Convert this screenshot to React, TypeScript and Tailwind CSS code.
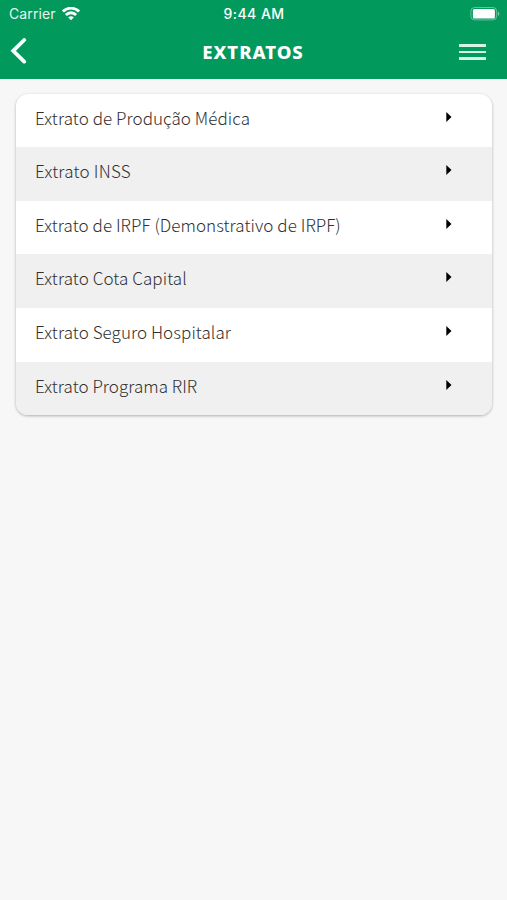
import React from "react";

const items = [
  { label: "Extrato de Produção Médica", spacing: "tracking-[0.07px]" },
  { label: "Extrato INSS", spacing: "tracking-[0.22px]" },
  { label: "Extrato de IRPF (Demonstrativo de IRPF)", spacing: "tracking-[0.06px]" },
  { label: "Extrato Cota Capital", spacing: "tracking-[0.08px]" },
  { label: "Extrato Seguro Hospitalar", spacing: "tracking-[0.07px]" },
  { label: "Extrato Programa RIR", spacing: "tracking-[0.04px]" },
];

const StatusBar = () => {
  return (
    <div className="grid h-[27px] grid-cols-3 items-center pl-[9px] pr-[7px] font-['Inter',sans-serif] text-white">
      <div className="flex items-center gap-[6px]">
        <span className="text-[14px] leading-[27px] tracking-[0.1px] text-[#e3f7ed]">Carrier</span>
        <svg width="18" height="14" viewBox="0 0 18 14" fill="none" stroke="currentColor" strokeWidth="2.8">
          <path d="M0.9 4.4C5.4 0.1 12.6 0.1 17.1 4.4" />
          <path d="M3.9 7.9C6.8 5 11.2 5 14.1 7.9" />
          <path d="M9 13.3L6.2 10.5C7.8 8.9 10.2 8.9 11.8 10.5Z" fill="currentColor" stroke="none" />
        </svg>
      </div>
      <div className="pr-[1px] text-center text-[14px] font-medium leading-[27px] tracking-[0.45px]">9:44 AM</div>
      <div className="flex justify-end">
        <svg width="30" height="14" viewBox="0 0 30 14" fill="none">
          <rect x="0.9" y="0.5" width="25.8" height="12.4" rx="3.8" stroke="#fff" strokeOpacity="0.4" />
          <rect x="2.9" y="2" width="22" height="9.4" rx="1.5" fill="#fff" />
          <path d="M28 4.6C29.8 5.4 29.8 8.2 28 9Z" fill="#fff" fillOpacity="0.5" />
        </svg>
      </div>
    </div>
  );
};

const Header = () => {
  return (
    <div className="flex h-[50px] items-center justify-between pl-[10px] pr-[21px] text-white">
      <svg width="28" height="28" viewBox="0 0 28 28" fill="none" stroke="currentColor" strokeWidth="3.8" strokeLinecap="round">
        <path d="M14.2 2L3.2 12.8L14.2 23.6" />
      </svg>
      <h1 className="pl-[9px] font-['Noto_Sans',sans-serif] text-[18.5px] font-extrabold leading-[50px] tracking-[1px]">
        EXTRATOS
      </h1>
      <div className="flex w-[27px] flex-col gap-[4px]">
        <div className="h-[2.5px] bg-[#d5f5e5]"></div>
        <div className="h-[2.5px] bg-[#d5f5e5]"></div>
        <div className="h-[2.5px] bg-[#d5f5e5]"></div>
      </div>
    </div>
  );
};

const App = () => {
  return (
    <div className="min-h-screen bg-[#f7f7f7]">
      <div className="h-[79px] bg-[#02995d]">
        <StatusBar />
        <Header />
      </div>
      <div className="ml-[16px] mr-[15px] mt-[15px] overflow-hidden rounded-[12px] bg-white shadow-[0_1px_3px_rgba(0,0,0,0.3)]">
        {items.map((item) => (
          <div
            key={item.label}
            className="flex h-[53.7px] items-start justify-between pl-[19px] pr-[40px] first:h-[53px] even:bg-[#f0f0f0]"
          >
            <span
              className={`whitespace-nowrap pt-[12px] font-['Noto_Sans_CJK_SC',sans-serif] text-[17px] font-light leading-[24px] text-[#303030] ${item.spacing}`}
            >
              {item.label}
            </span>
            <svg width="6" height="10" viewBox="0 0 6 10" className="mt-[18px]">
              <path d="M0.3 0L5.5 5L0.3 10Z" fill="#000" />
            </svg>
          </div>
        ))}
      </div>
    </div>
  );
};

export default App;
